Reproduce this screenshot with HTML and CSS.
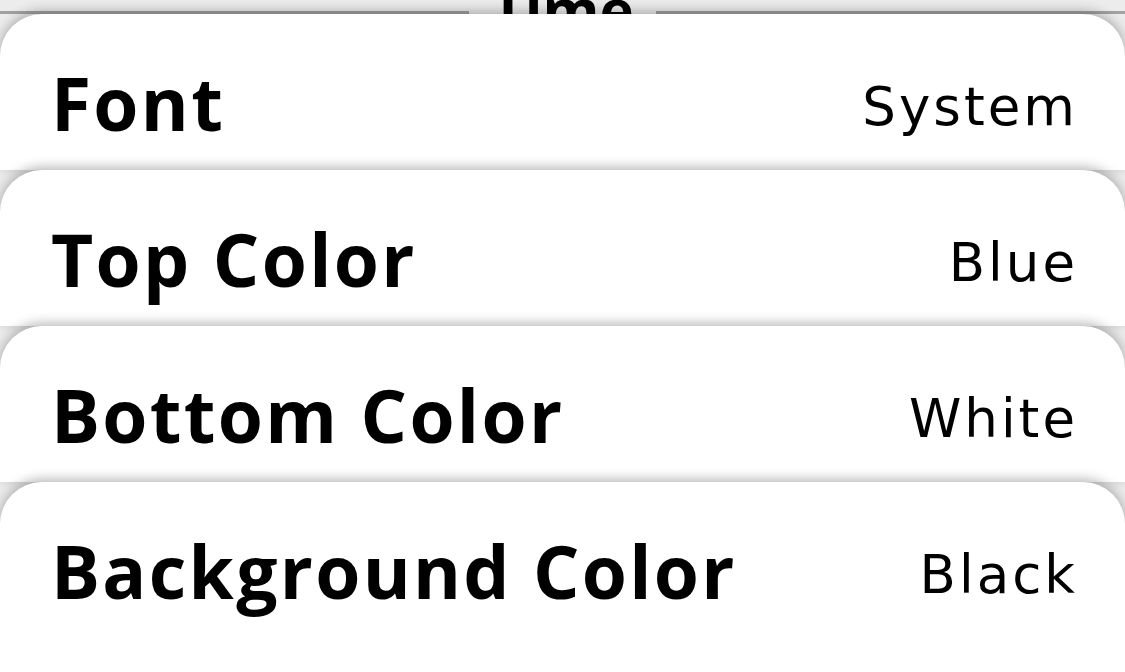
FILE: index.html
```html
<!DOCTYPE html>
<html lang="en">
<head>
    <meta charset="UTF-8">
    <meta name="viewport" content="width=device-width, initial-scale=1.0">
    <title>Settings</title>
    <link rel="stylesheet" href="styles.css">
</head>
<body>
    <div class="section-head">
        <span class="rule"></span>
        <span class="section-title">Time</span>
        <span class="rule"></span>
    </div>
    <div class="cards">
        <div class="card">
            <span class="label">Font</span>
            <span class="value">System</span>
        </div>
        <div class="card">
            <span class="label">Top Color</span>
            <span class="value">Blue</span>
        </div>
        <div class="card">
            <span class="label">Bottom Color</span>
            <span class="value">White</span>
        </div>
        <div class="card">
            <span class="label">Background Color</span>
            <span class="value">Black</span>
        </div>
    </div>
</body>
</html>
```

FILE: styles.css
```css
html, body {
    margin: 0;
    height: 100%;
    overflow: hidden;
}
body {
    background-color: #ececec;
    color: #000;
    font-family: "Open Sans", sans-serif;
}
.section-head {
    height: 14px;
    display: flex;
    align-items: flex-start;
    overflow: hidden;
}
.rule {
    flex: 1;
    height: 3px;
    margin-top: 11px;
    background-color: #a2a2a2;
}
.section-title {
    font-weight: 700;
    font-size: 58px;
    line-height: 1;
    margin-top: -20px;
    padding: 0 22px;
}
.cards {
    position: relative;
}
.card {
    position: relative;
    height: 156px;
    box-sizing: border-box;
    padding: 52px 50px 0 51px;
    display: flex;
    align-items: flex-start;
    justify-content: space-between;
    background-color: #fff;
    border-radius: 42px 42px 0 0;
    box-shadow: 0 -3px 12px rgba(0, 0, 0, 0.28);
}
.card:last-child {
    height: 220px;
}
.label {
    font-weight: 700;
    font-size: 73px;
    line-height: 1;
    letter-spacing: 2.3px;
}
.value {
    font-family: "DejaVu Sans", sans-serif;
    font-size: 53px;
    line-height: 1;
    letter-spacing: 3px;
    margin: 14px -3px 0 0;
}
```
